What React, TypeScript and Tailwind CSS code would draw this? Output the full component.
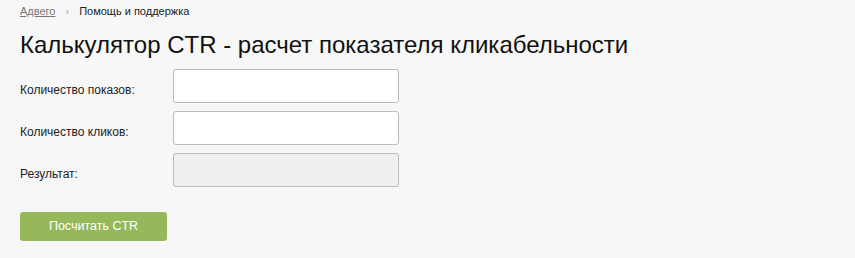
const fields = [
  { label: "Количество показов:", disabled: false },
  { label: "Количество кликов:", disabled: false },
  { label: "Результат:", disabled: true },
];

const App = () => {
  return (
    <div className="min-h-[258px] bg-[#f7f7f7] px-5 pt-[3px] font-['Liberation_Sans',sans-serif] text-[#111]">
      <div className="flex items-center text-[11px] leading-[16px]">
        <a href="#" className="text-[#777] underline">
          Адвего
        </a>
        <span className="mx-[10px] text-[#aaa]">›</span>
        <span className="text-[#222]">Помощь и поддержка</span>
      </div>
      <h1 className="mt-[11px] text-[24px] leading-[30px] font-normal">
        Калькулятор CTR - расчет показателя кликабельности
      </h1>
      <div className="mt-[9px] flex flex-col gap-[8px]">
        {fields.map((f) => (
          <div key={f.label} className="flex items-start">
            <label className="w-[153px] pt-[13px] text-[12px] leading-[16px] text-[#222]">
              {f.label}
            </label>
            <input
              type="text"
              disabled={f.disabled}
              className={`h-[34px] w-[226px] rounded-[3px] border border-[#bbb] ${
                f.disabled ? "bg-[#efefef]" : "bg-white"
              }`}
            />
          </div>
        ))}
      </div>
      <button className="mt-[25px] h-[29px] w-[147px] rounded-[3px] bg-[#94b85a] text-[12.5px] text-white">
        Посчитать CTR
      </button>
    </div>
  );
};

export default App;
